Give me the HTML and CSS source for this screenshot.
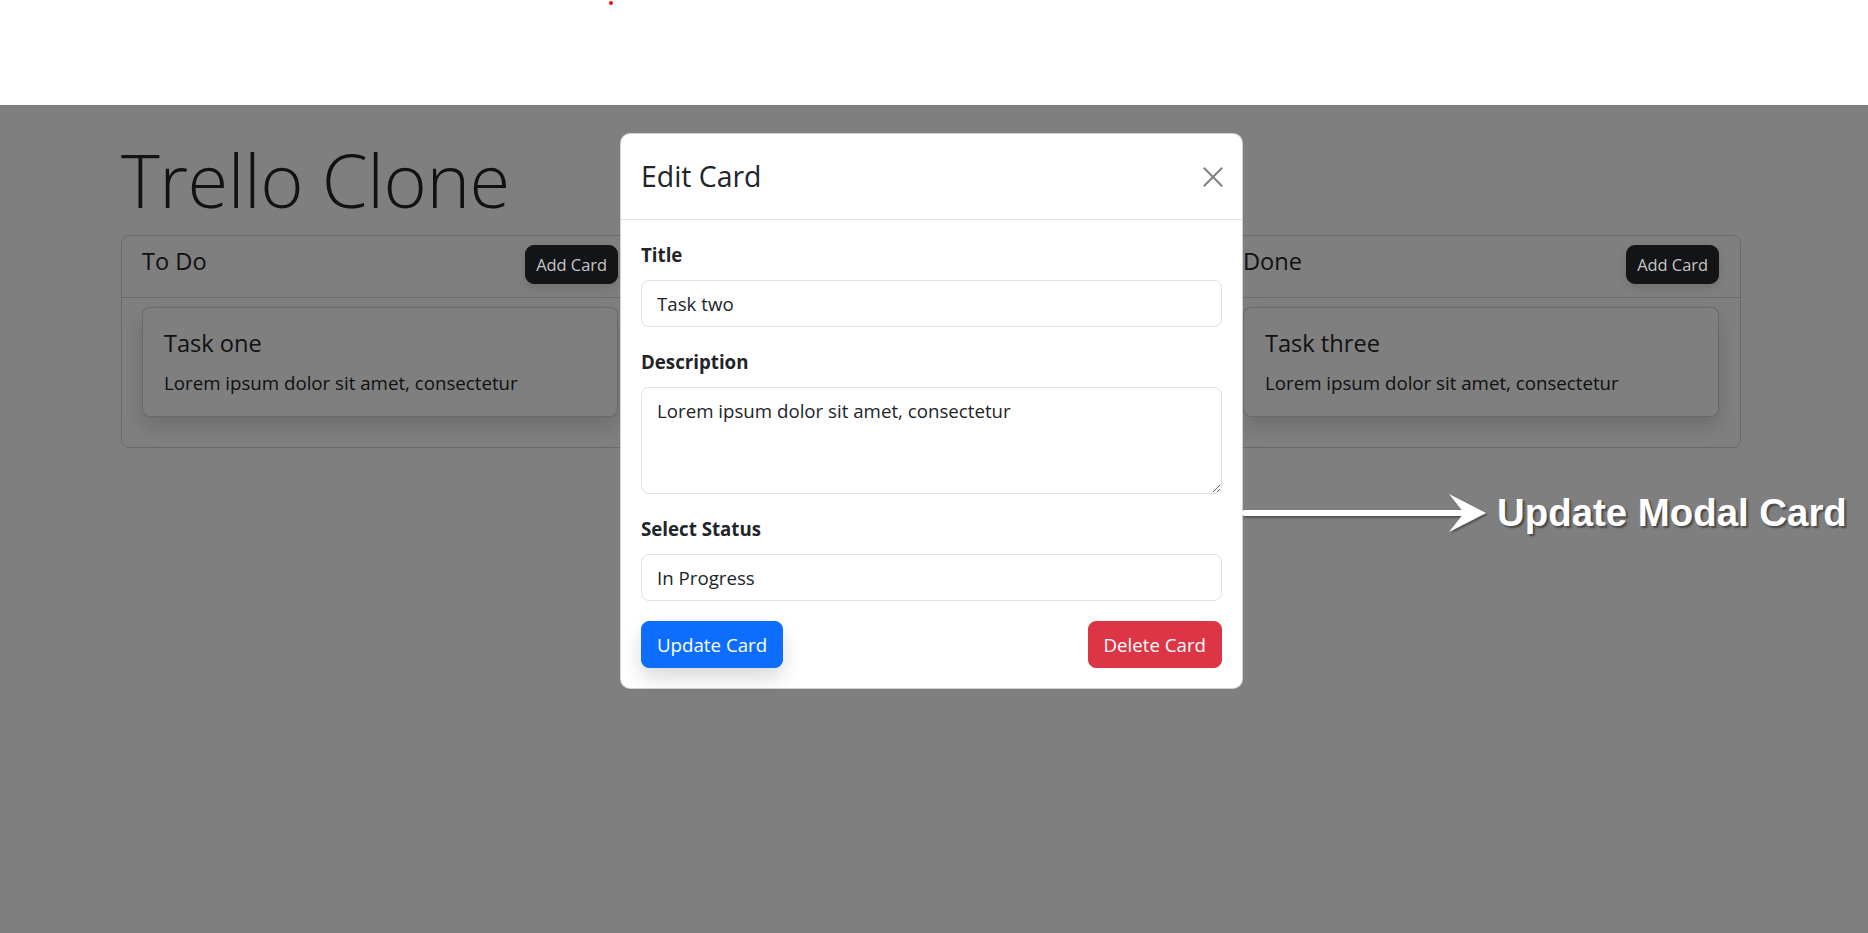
FILE: index.html
```html
<!DOCTYPE html>
<html lang="en">
<head>
<meta charset="utf-8">
<title>Trello Clone</title>
<link rel="stylesheet" href="styles.css">
</head>
<body>
<div class="topstrip"><span class="dot"></span></div>
<div class="app">
  <div class="container">
    <h1 class="title">Trello Clone</h1>
    <div class="board">
      <div class="board-head">
        <div class="col-head"><h5 class="col-title">To Do</h5><button class="btn-add">Add Card</button></div>
        <div class="col-head covered"><h5 class="col-title">In Progress</h5><button class="btn-add">Add Card</button></div>
        <div class="col-head"><h5 class="col-title">Done</h5><button class="btn-add">Add Card</button></div>
      </div>
      <div class="board-body">
        <div class="task"><h5 class="task-title">Task one</h5><p class="task-text">Lorem ipsum dolor sit amet, consectetur</p></div>
        <div class="task covered"><h5 class="task-title">Task two</h5><p class="task-text">Lorem ipsum dolor sit amet, consectetur</p></div>
        <div class="task"><h5 class="task-title">Task three</h5><p class="task-text">Lorem ipsum dolor sit amet, consectetur</p></div>
      </div>
    </div>
  </div>

  <div class="backdrop"></div>

  <div class="modal-layer">
    <div class="modal">
      <div class="modal-header">
        <h4 class="modal-title">Edit Card</h4>
        <button class="btn-close" aria-label="Close">
          <svg width="20" height="20" viewBox="0 0 20 20"><path d="M0.8 0.8 L19.2 19.2 M19.2 0.8 L0.8 19.2" stroke="#808080" stroke-width="2" fill="none"/></svg>
        </button>
      </div>
      <div class="modal-body">
        <div class="field">
          <label class="label">Title</label>
          <input class="control" type="text" value="Task two">
        </div>
        <div class="field">
          <label class="label">Description</label>
          <textarea class="control area" rows="3">Lorem ipsum dolor sit amet, consectetur</textarea>
        </div>
        <div class="field">
          <label class="label">Select Status</label>
          <select class="control select"><option>In Progress</option></select>
        </div>
        <div class="actions">
          <button class="btn btn-primary">Update Card</button>
          <button class="btn btn-danger">Delete Card</button>
        </div>
      </div>
    </div>
  </div>

  <div class="annotation">
    <svg class="arrow" width="260" height="50" viewBox="0 0 260 50">
      <defs>
        <filter id="sh" x="-10%" y="-40%" width="120%" height="180%">
          <feDropShadow dx="1.5" dy="1.5" stdDeviation="1.2" flood-color="#000" flood-opacity="0.45"/>
        </filter>
      </defs>
      <g filter="url(#sh)">
        <line x1="8" y1="24" x2="226" y2="24" stroke="#fff" stroke-width="6" stroke-linecap="round"/>
        <polygon points="212,5 249,24 212,43 227,24" fill="#fff"/>
      </g>
    </svg>
    <span class="note">Update Modal Card</span>
  </div>
</div>
</body>
</html>
```
FILE: styles.css
```css
* { box-sizing: border-box; }

html, body {
  margin: 0;
  padding: 0;
  width: 1868px;
  height: 933px;
  overflow: hidden;
  background: #fff;
}

body {
  font-family: "Open Sans", "Noto Sans", sans-serif;
  font-size: 18.7px;
  line-height: 30px;
  color: #212529;
}

.topstrip {
  position: relative;
  height: 105px;
  background: #fff;
}

.dot {
  position: absolute;
  left: 609px;
  top: 1px;
  width: 4px;
  height: 4px;
  border-radius: 50%;
  background: #e3101a;
}

.app {
  position: relative;
  height: 828px;
  background: #fff;
}

.container {
  padding-left: 121px;
  padding-top: 27px;
}

.title {
  margin: 0 0 7px 0;
  font-size: 74px;
  font-weight: 300;
  line-height: 96px;
  letter-spacing: -0.5px;
  color: #212529;
}

.board {
  width: 1620px;
  border: 1px solid rgba(0, 0, 0, 0.175);
  border-radius: 8px;
}

.board-head,
.board-body {
  display: grid;
  grid-template-columns: repeat(3, 476px);
  column-gap: 74.5px;
  padding-left: 20px;
  padding-right: 21px;
}

.board-head {
  border-bottom: 1px solid rgba(0, 0, 0, 0.175);
  padding-top: 9px;
  padding-bottom: 13px;
}

.col-head {
  display: flex;
  justify-content: space-between;
  align-items: flex-start;
}

.covered {
  visibility: hidden;
}

.col-title {
  margin: 1px 0 0 0;
  font-size: 23.6px;
  font-weight: 500;
  line-height: 30px;
}

.btn-add {
  position: relative;
  z-index: 2;
  font-family: inherit;
  font-size: 16.4px;
  line-height: 26px;
  padding: 5.5px 10px;
  color: #c6c6c6;
  background: #121416;
  border: 1px solid #121416;
  border-radius: 9px;
  box-shadow: 0 4px 10px rgba(0, 0, 0, 0.12);
}

.board-body {
  padding-top: 9px;
  padding-bottom: 30px;
}

.task {
  border: 1px solid rgba(0, 0, 0, 0.175);
  border-radius: 8px;
  padding: 20px 21px 18px 21px;
  background: #fff;
  box-shadow: 0 10px 20px rgba(0, 0, 0, 0.15);
}

.task-title {
  margin: 0 0 10px 0;
  font-size: 23.6px;
  font-weight: 500;
  line-height: 30px;
}

.task-text {
  margin: 0;
}

.backdrop {
  position: absolute;
  inset: 0;
  z-index: 1;
  background: rgba(0, 0, 0, 0.5);
}

.modal-layer {
  position: absolute;
  inset: 0;
  z-index: 3;
  display: flex;
  align-items: flex-start;
  padding: 28px 0 0 620px;
}

.modal {
  width: 623px;
  background: #fff;
  border: 1px solid rgba(0, 0, 0, 0.175);
  border-radius: 10px;
}

.modal-header {
  display: flex;
  align-items: center;
  justify-content: space-between;
  padding: 20px 20px 20px 20px;
  border-bottom: 1px solid #dee2e6;
}

.modal-title {
  margin: 0;
  font-size: 28.4px;
  font-weight: 500;
  line-height: 45px;
}

.btn-close {
  width: 20px;
  height: 20px;
  padding: 0;
  margin: 0 -1px 0 0;
  border: 0;
  background: transparent;
  display: flex;
}

.modal-body {
  padding: 20px;
}

.field {
  margin-bottom: 20px;
}

.label {
  display: block;
  font-weight: 700;
  margin-bottom: 10px;
}

.control {
  display: block;
  width: 100%;
  font-family: inherit;
  font-size: 18.7px;
  line-height: 30px;
  color: #212529;
  padding: 7.5px 15px;
  border: 1px solid #dee2e6;
  border-radius: 8px;
  background: #fff;
  margin: 0;
}

.area {
  height: 107px;
  resize: vertical;
}

.select {
  appearance: none;
  -webkit-appearance: none;
  height: 47px;
}

.actions {
  display: flex;
  justify-content: space-between;
}

.btn {
  font-family: inherit;
  font-size: 18.7px;
  line-height: 30px;
  padding: 7.5px 15px;
  border-radius: 8px;
  color: #fff;
  border: 1px solid transparent;
}

.btn-primary {
  background: #0d6efd;
  border-color: #0d6efd;
  box-shadow: 0 10px 20px rgba(0, 0, 0, 0.15);
}

.btn-danger {
  background: #dc3545;
  border-color: #dc3545;
}

.annotation {
  position: absolute;
  z-index: 4;
  left: 1237px;
  top: 384px;
  display: flex;
  align-items: flex-start;
}

.arrow {
  display: block;
}

.note {
  margin-left: 0;
  margin-top: 3px;
  font-family: "Liberation Sans", Arial, sans-serif;
  font-weight: 700;
  font-size: 38.4px;
  line-height: 42px;
  color: #fff;
  white-space: nowrap;
  text-shadow: 2px 2px 2px rgba(0, 0, 0, 0.45);
}
```
